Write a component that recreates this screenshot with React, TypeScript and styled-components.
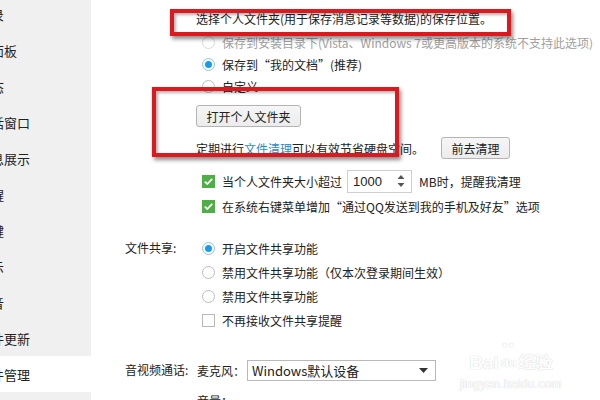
import styled, { createGlobalStyle } from "styled-components";

const GlobalStyle = createGlobalStyle`
  html, body {
    margin: 0;
    padding: 0;
    background: #fff;
  }
  body {
    font-family: "Noto Sans CJK SC", "Liberation Sans", sans-serif;
    font-size: 12px;
    color: #222;
    overflow: hidden;
  }
`;

const Window = styled.div`
  position: relative;
  display: flex;
  width: 600px;
  height: 400px;
  overflow: hidden;
`;

const Sidebar = styled.nav`
  flex: none;
  width: 91px;
  background: #f0f0f0;
  overflow: hidden;
`;

const NavList = styled.ul`
  list-style: none;
  margin: -4px 0 0;
  padding: 0;
`;

const NavItem = styled.li<{ $active?: boolean }>`
  display: flex;
  align-items: center;
  height: 36px;
  font-size: 13px;
  white-space: nowrap;
  color: #222;
  background: ${(p) => (p.$active ? "#fff" : "transparent")};
`;

const NavText = styled.span`
  margin-left: -22px;
`;

const Main = styled.main`
  flex: 1;
  display: flex;
  flex-direction: column;
  padding: 7px 0 0 34px;
`;

const Section = styled.section<{ $gap?: number }>`
  display: grid;
  grid-template-columns: 71px 1fr;
  margin-top: ${(p) => p.$gap ?? 0}px;
`;

const SectionLabel = styled.div<{ $h?: number }>`
  height: ${(p) => p.$h ?? 24}px;
  line-height: ${(p) => p.$h ?? 24}px;
  white-space: nowrap;
`;

const Controls = styled.div`
  display: flex;
  flex-direction: column;
  align-items: flex-start;
`;

const Line = styled.div<{ $h?: number; $top?: number; $indent?: boolean }>`
  display: flex;
  align-items: center;
  height: ${(p) => p.$h ?? 22}px;
  margin-top: ${(p) => p.$top ?? 0}px;
  padding-left: ${(p) => (p.$indent ? 6 : 0)}px;
  white-space: nowrap;
`;

const Radio = styled.span<{ $checked?: boolean; $disabled?: boolean }>`
  position: relative;
  flex: none;
  box-sizing: border-box;
  width: 13px;
  height: 13px;
  margin-right: 7px;
  border-radius: 50%;
  background: #fff;
  border: 1px solid
    ${(p) => (p.$checked ? "#8cc4ec" : p.$disabled ? "#dadada" : "#bdbdbd")};
  &::after {
    content: "";
    display: ${(p) => (p.$checked ? "block" : "none")};
    position: absolute;
    left: 2px;
    top: 2px;
    width: 7px;
    height: 7px;
    border-radius: 50%;
    background: #1c9ce8;
  }
`;

const Check = styled.span<{ $checked?: boolean }>`
  display: flex;
  align-items: center;
  justify-content: center;
  flex: none;
  box-sizing: border-box;
  width: 13px;
  height: 13px;
  margin-right: 7px;
  background: ${(p) => (p.$checked ? "#4fae47" : "#fff")};
  border: 1px solid ${(p) => (p.$checked ? "#4fae47" : "#b8b8b8")};
`;

const OptionText = styled.span<{ $muted?: boolean }>`
  color: ${(p) => (p.$muted ? "#a0a0a0" : "#222")};
`;

const Link = styled.span`
  color: #2b8acb;
`;

const Spacer = styled.span<{ $w: number }>`
  width: ${(p) => p.$w}px;
`;

const Button = styled.button<{ $w: number }>`
  box-sizing: border-box;
  width: ${(p) => p.$w}px;
  height: 22px;
  padding: 0;
  font-family: inherit;
  font-size: 12px;
  color: #222;
  background: linear-gradient(#f6f6f6, #ececec);
  border: 1px solid #b4b4b4;
  border-radius: 3px;
`;

const Spin = styled.div`
  display: flex;
  align-items: center;
  justify-content: space-between;
  box-sizing: border-box;
  width: 65px;
  height: 23px;
  margin: 0 7px 0 5px;
  padding: 0 6px 0 5px;
  border: 1px solid #cfcfcf;
  font-size: 13px;
  font-family: "Liberation Sans", sans-serif;
`;

const SubLabel = styled.span`
  width: 50px;
  margin-left: 1px;
`;

const Select = styled.div`
  display: flex;
  align-items: center;
  justify-content: space-between;
  box-sizing: border-box;
  width: 189px;
  height: 21px;
  padding: 0 7px 0 4px;
  border: 1px solid #b9b9b9;
  font-size: 13px;
`;

const Slider = styled.div`
  width: 90px;
  height: 3px;
  margin-left: -14px;
  margin-top: 6px;
  background: linear-gradient(90deg, #bfdbe4, #d8e8ec 80%, #eef2f3);
`;

const Highlight = styled.div<{ $x: number; $y: number; $w: number; $h: number }>`
  position: absolute;
  left: ${(p) => p.$x}px;
  top: ${(p) => p.$y}px;
  width: ${(p) => p.$w}px;
  height: ${(p) => p.$h}px;
  box-sizing: border-box;
  border: 4px solid #da1a1f;
  box-shadow: 2px 3px 4px rgba(0, 0, 0, 0.45),
    inset 2px 2px 3px rgba(0, 0, 0, 0.3);
  pointer-events: none;
`;

const Watermark = styled.div`
  position: absolute;
  left: 460px;
  top: 336px;
  display: flex;
  flex-direction: column;
  align-items: center;
  color: #fff;
  text-shadow: 0 0 1px #d6d6d6, 0 0 1px #d6d6d6;
  font-family: "Liberation Sans", sans-serif;
  pointer-events: none;
`;

const MarkTop = styled.div`
  display: flex;
  align-items: flex-end;
  gap: 2px;
  font-size: 19px;
  font-weight: bold;
  line-height: 18px;
`;

const MarkSub = styled.div`
  margin-top: 5px;
  font-size: 12px;
  letter-spacing: 0.3px;
`;

const Paw = styled.span`
  display: flex;
  flex-direction: column;
  align-items: center;
  font-size: 13px;
`;

const PawToes = styled.span`
  font-size: 9px;
  letter-spacing: 1px;
`;

const MarkCn = styled.span`
  font-size: 17px;
`;

const CheckIcon = () => (
  <svg width="11" height="11" viewBox="0 0 11 11">
    <path d="M1.8 5.6 L4.3 8 L9.2 2.8" fill="none" stroke="#fff" strokeWidth="1.8" />
  </svg>
);

const SpinIcon = () => (
  <svg width="8" height="14" viewBox="0 0 8 14">
    <path d="M4 1 L7.5 5 H0.5 Z" fill="#555" />
    <path d="M4 13 L7.5 9 H0.5 Z" fill="#555" />
  </svg>
);

const DropIcon = () => (
  <svg width="9" height="5" viewBox="0 0 9 5">
    <path d="M0 0 H9 L4.5 5 Z" fill="#333" />
  </svg>
);

const navItems = [
  "登录",
  "主面板",
  "状态",
  "会话窗口",
  "消息展示",
  "提醒",
  "热键",
  "显示",
  "声音",
  "软件更新",
  "文件管理",
  "安全",
];

function App() {
  return (
    <>
      <GlobalStyle />
      <Window>
        <Sidebar>
          <NavList>
            {navItems.map((item) => (
              <NavItem key={item} $active={item === "文件管理"}>
                <NavText>{item}</NavText>
              </NavItem>
            ))}
          </NavList>
        </Sidebar>
        <Main>
          <Section>
            <div />
            <Controls>
              <Line>选择个人文件夹(用于保存消息记录等数据)的保存位置。</Line>
              <Line $indent $top={2}>
                <Radio $disabled />
                <OptionText $muted>
                  保存到安装目录下(Vista、Windows 7或更高版本的系统不支持此选项)
                </OptionText>
              </Line>
              <Line $indent>
                <Radio $checked />
                <OptionText>保存到“我的文档”(推荐)</OptionText>
              </Line>
              <Line $indent>
                <Radio />
                <OptionText>自定义</OptionText>
              </Line>
              <Line $top={8}>
                <Button $w={105}>打开个人文件夹</Button>
              </Line>
              <Line $top={10}>
                定期进行<Link>文件清理</Link>可以有效节省硬盘空间。
                <Spacer $w={17} />
                <Button $w={69}>前去清理</Button>
              </Line>
              <Line $indent $top={10} $h={24}>
                <Check $checked>
                  <CheckIcon />
                </Check>
                <OptionText>当个人文件夹大小超过</OptionText>
                <Spin>
                  1000
                  <SpinIcon />
                </Spin>
                <OptionText>MB时，提醒我清理</OptionText>
              </Line>
              <Line $indent $top={2}>
                <Check $checked>
                  <CheckIcon />
                </Check>
                <OptionText>在系统右键菜单增加“通过QQ发送到我的手机及好友”选项</OptionText>
              </Line>
            </Controls>
          </Section>

          <Section $gap={19}>
            <SectionLabel>文件共享:</SectionLabel>
            <Controls>
              <Line $indent $h={24}>
                <Radio $checked />
                <OptionText>开启文件共享功能</OptionText>
              </Line>
              <Line $indent $h={24}>
                <Radio />
                <OptionText>禁用文件共享功能（仅本次登录期间生效）</OptionText>
              </Line>
              <Line $indent $h={24}>
                <Radio />
                <OptionText>禁用文件共享功能</OptionText>
              </Line>
              <Line $indent $h={24}>
                <Check />
                <OptionText>不再接收文件共享提醒</OptionText>
              </Line>
            </Controls>
          </Section>

          <Section $gap={27}>
            <SectionLabel $h={22}>音视频通话:</SectionLabel>
            <Controls>
              <Line>
                <SubLabel>麦克风：</SubLabel>
                <Select>
                  Windows默认设备
                  <DropIcon />
                </Select>
              </Line>
              <Line $top={8}>
                <SubLabel>音量：</SubLabel>
                <Slider />
              </Line>
            </Controls>
          </Section>
        </Main>

        <Highlight $x={170} $y={9} $w={341} $h={27} />
        <Highlight $x={152} $y={87} $w={247} $h={70} />

        <Watermark>
          <MarkTop>
            <span>Bai</span>
            <Paw>
              <PawToes>●●</PawToes>
              du
            </Paw>
            <MarkCn>经验</MarkCn>
          </MarkTop>
          <MarkSub>jingyan.baidu.com</MarkSub>
        </Watermark>
      </Window>
    </>
  );
}

export default App;
